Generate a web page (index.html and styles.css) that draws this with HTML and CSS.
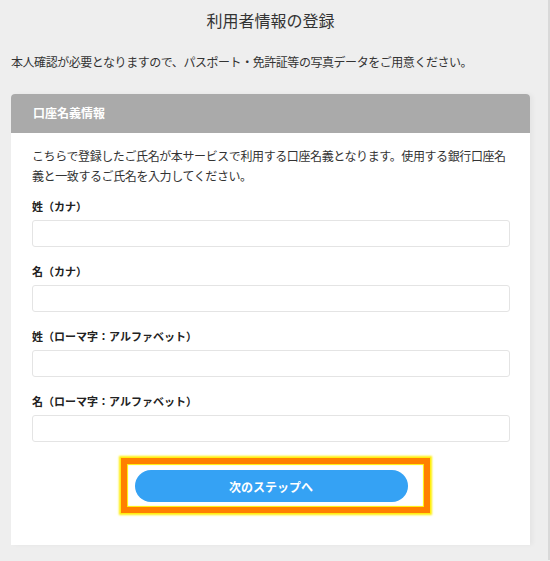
FILE: index.html
```html
<!DOCTYPE html>
<html lang="ja">
<head>
    <meta charset="UTF-8">
    <meta name="viewport" content="width=device-width, initial-scale=1.0">
    <title>利用者情報の登録</title>
    <link rel="stylesheet" href="styles.css">
</head>
<body>
    <div class="page">
        <h1>利用者情報の登録</h1>
        <p class="intro">本人確認が必要となりますので、パスポート・免許証等の写真データをご用意ください。</p>

        <!-- Account holder card -->
        <div class="card">
            <div class="card-header">口座名義情報</div>
            <div class="card-body">
                <p class="note">こちらで登録したご氏名が本サービスで利用する口座名義となります。使用する銀行口座名義と一致するご氏名を入力してください。</p>

                <label class="field-label" for="last-kana">姓（カナ）</label>
                <input class="field" type="text" id="last-kana">

                <label class="field-label" for="first-kana">名（カナ）</label>
                <input class="field" type="text" id="first-kana">

                <label class="field-label" for="last-roman">姓（ローマ字：アルファベット）</label>
                <input class="field" type="text" id="last-roman">

                <label class="field-label" for="first-roman">名（ローマ字：アルファベット）</label>
                <input class="field" type="text" id="first-roman">

                <div class="actions">
                    <div class="highlight">
                        <button class="next-btn" type="button">次のステップへ</button>
                    </div>
                </div>
            </div>
        </div>
    </div>
</body>
</html>
```

FILE: styles.css
```css
body {
    margin: 0;
    padding: 0;
    background-color: #eeeeee;
    font-family: "Noto Sans CJK JP", "Noto Sans", sans-serif;
    color: #333333;
}
.page {
    height: 561px;
    box-sizing: border-box;
    padding: 10px 18px 0 11px;
    border-top: 1px solid #d6d6d6;
    border-right: 2px solid #d9d9d9;
    margin-top: -1px;
}
h1 {
    margin: 0;
    font-size: 16px;
    font-weight: 400;
    line-height: 20px;
    text-align: center;
    color: #333333;
}
.intro {
    margin: 22px 0 0 0;
    font-size: 12px;
    line-height: 20px;
    letter-spacing: -0.45px;
}
.card {
    margin-top: 22px;
    background-color: #ffffff;
    border-radius: 4px 4px 0 0;
    box-shadow: 3px 0 4px rgba(0, 0, 0, 0.04);
}
.card-header {
    height: 39px;
    line-height: 38px;
    padding-left: 22px;
    background-color: #aaaaaa;
    border-radius: 4px 4px 0 0;
    color: #ffffff;
    font-size: 12px;
    font-weight: 700;
}
.card-body {
    padding: 13px 20px 32px 21px;
}
.note {
    margin: 0 0 12px 0;
    font-size: 12px;
    line-height: 20px;
    letter-spacing: -0.4px;
}
.field-label {
    display: block;
    font-size: 11px;
    font-weight: 700;
    line-height: 16px;
    margin-bottom: 6px;
    color: #222222;
}
.field {
    display: block;
    width: 100%;
    height: 27px;
    box-sizing: border-box;
    margin: 0 0 16px 0;
    border: 1px solid #e4e4e4;
    border-radius: 3px;
    background-color: #ffffff;
}
.actions {
    display: flex;
    justify-content: center;
}
.highlight {
    display: flex;
    padding: 6px 16px 5px 8px;
    border: 6px solid #ff8000;
    box-shadow: 0 0 2px 2px #ffee00, inset 0 0 1px 1px #ffee00;
    margin-left: 8px;
}
.next-btn {
    width: 273px;
    height: 32px;
    border: none;
    border-radius: 16px;
    background-color: #35a2f4;
    color: #ffffff;
    font-family: "Noto Sans CJK JP", sans-serif;
    font-size: 12px;
    font-weight: 700;
}
```
